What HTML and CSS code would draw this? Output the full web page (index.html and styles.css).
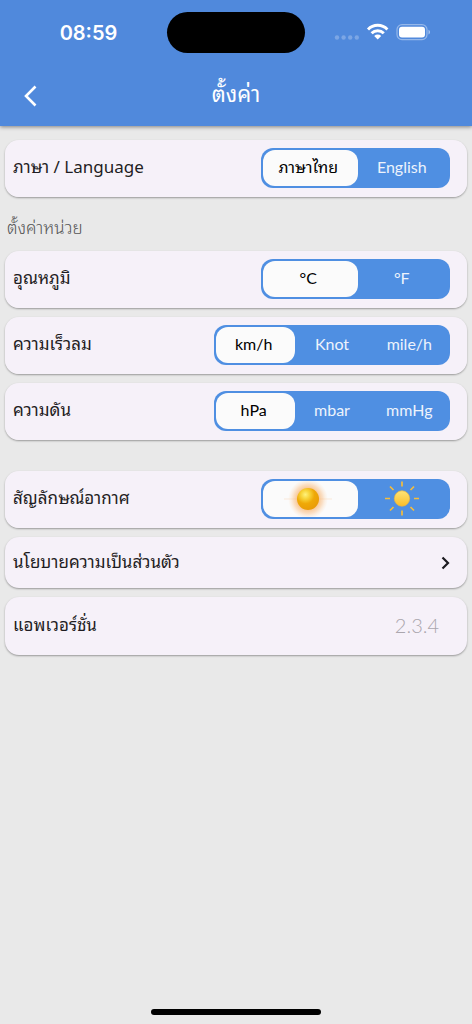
FILE: index.html
```html
<!DOCTYPE html>
<html lang="th">
<head>
<meta charset="utf-8">
<meta name="viewport" content="width=device-width, initial-scale=1">
<title>ตั้งค่า</title>
<link rel="stylesheet" href="styles.css">
</head>
<body>
<div class="screen">
  <header class="header">
    <div class="status">
      <time class="clock">08:59</time>
      <div class="island"></div>
      <div class="indicators">
        <svg width="96" height="20" viewBox="0 0 96 20" aria-hidden="true">
          <g fill="#fff" fill-opacity=".25"><circle cx="3" cy="14.500" r="2.200"/><circle cx="9.600" cy="14.500" r="2.200"/><circle cx="16.200" cy="14.500" r="2.200"/><circle cx="22.800" cy="14.500" r="2.200"/></g>
          <g fill="none" stroke="#fff" stroke-width="2.900"><path d="M34 6.400a13.500 13.500 0 0 1 19.400 0"/><path d="M37.600 10.300a8.600 8.600 0 0 1 12.200 0"/></g>
          <path d="M40.200 13a5 5 0 0 1 7 0L43.700 16.600z" fill="#fff"/>
          <rect x="63" y="1.600" width="30" height="15" rx="5" fill="none" stroke="#fff" stroke-opacity=".4" stroke-width="1.200"/>
          <rect x="65" y="3.800" width="26" height="10.600" rx="3" fill="#fff"/>
          <path d="M94.500 6.700c2 .8 2 4 0 4.800z" fill="#fff" fill-opacity=".5"/>
        </svg>
      </div>
    </div>
    <div class="bar">
      <button class="back" type="button" aria-label="กลับ">
        <svg width="14" height="22" viewBox="0 0 14 22" aria-hidden="true"><path d="M11.500 1.500 2 11l9.500 9.500" fill="none" stroke="#fff" stroke-width="2.600"/></svg>
      </button>
      <h1 class="title">ตั้งค่า</h1>
    </div>
  </header>
  <main class="settings">
    <fieldset class="card" aria-labelledby="language">
      <span class="name" id="language">ภาษา / Language</span>
      <div class="segments two">
        <label class="segment"><input type="radio" name="language" checked><span>ภาษาไทย</span></label>
        <label class="segment"><input type="radio" name="language"><span>English</span></label>
      </div>
    </fieldset>
    <h2 class="section">ตั้งค่าหน่วย</h2>
    <fieldset class="card" aria-labelledby="temperature">
      <span class="name" id="temperature">อุณหภูมิ</span>
      <div class="segments two">
        <label class="segment"><input type="radio" name="temperature" checked><span>°C</span></label>
        <label class="segment"><input type="radio" name="temperature"><span>°F</span></label>
      </div>
    </fieldset>
    <fieldset class="card" aria-labelledby="wind">
      <span class="name" id="wind">ความเร็วลม</span>
      <div class="segments three">
        <label class="segment"><input type="radio" name="wind" checked><span>km/h</span></label>
        <label class="segment"><input type="radio" name="wind"><span>Knot</span></label>
        <label class="segment"><input type="radio" name="wind"><span>mile/h</span></label>
      </div>
    </fieldset>
    <fieldset class="card group-end" aria-labelledby="pressure">
      <span class="name" id="pressure">ความดัน</span>
      <div class="segments three">
        <label class="segment"><input type="radio" name="pressure" checked><span>hPa</span></label>
        <label class="segment"><input type="radio" name="pressure"><span>mbar</span></label>
        <label class="segment"><input type="radio" name="pressure"><span>mmHg</span></label>
      </div>
    </fieldset>
    <fieldset class="card" aria-labelledby="symbols">
      <span class="name" id="symbols">สัญลักษณ์อากาศ</span>
      <div class="segments two">
        <label class="segment picture"><input type="radio" name="symbols" aria-label="สมจริง" checked>
          <svg width="48" height="36" viewBox="0 0 48 36" aria-hidden="true">
            <defs>
              <radialGradient id="halo"><stop offset=".45" stop-color="#f6a34d" stop-opacity=".75"/><stop offset=".75" stop-color="#f9bd82" stop-opacity=".45"/><stop offset="1" stop-color="#fde3c8" stop-opacity=".1"/></radialGradient>
              <radialGradient id="ball" cx=".38" cy=".3" r=".75"><stop offset="0" stop-color="#fff27d"/><stop offset=".25" stop-color="#f8d63c"/><stop offset=".55" stop-color="#efa908"/><stop offset="1" stop-color="#e89a08"/></radialGradient>
            </defs>
            <path d="M0 18h48" stroke="#fbe3cd" stroke-width=".7"/>
            <circle cx="24" cy="18" r="19.500" fill="url(#halo)"/>
            <circle cx="24" cy="18" r="11" fill="url(#ball)"/>
          </svg>
        </label>
        <label class="segment picture"><input type="radio" name="symbols" aria-label="เรียบง่าย">
          <svg width="36" height="36" viewBox="0 0 36 36" aria-hidden="true">
            <defs><linearGradient id="sun" x2="0" y2="1"><stop stop-color="#fee477"/><stop offset="1" stop-color="#fbbd27"/></linearGradient></defs>
            <path d="M18 .5v5M18 29.500v5M1 17.500h5M30 17.500h5M6 5.500l3.500 3.500M26.500 26 30 29.500M6 29.500l3.500-3.500M26.500 9 30 5.500" stroke="#f5bd3b" stroke-width="1.700"/>
            <circle cx="18" cy="17.500" r="7.700" fill="url(#sun)" stroke="#e9b441" stroke-width=".7"/>
          </svg>
        </label>
      </div>
    </fieldset>
    <a class="card link" href="#privacy">
      <span class="name">นโยบายความเป็นส่วนตัว</span>
      <svg width="9" height="14" viewBox="0 0 9 14" aria-hidden="true"><path d="m1.500 1.500 5.500 5.500-5.500 5.500" fill="none" stroke="#1c1b20" stroke-width="2.200"/></svg>
    </a>
    <div class="card version">
      <span class="name">แอพเวอร์ชั่น</span>
      <span class="number">2.3.4</span>
    </div>
  </main>
  <div class="home"></div>
</div>
</body>
</html>
```
FILE: styles.css
```css
* {
  box-sizing: border-box;
}

body {
  margin: 0;
  background: #e9e9e9;
  color: #1f1d23;
  font-family: Lato, "Noto Sans Thai Looped", "Noto Sans Thai", "Noto Sans", sans-serif;
}

.screen {
  min-height: 100vh;
  display: flex;
  flex-direction: column;
}

.header {
  background: #5089dc;
  color: #fff;
  box-shadow: 0 1px 4px rgba(0, 0, 0, 0.45);
}

.status {
  display: grid;
  grid-template-columns: 1fr 138px 1fr;
  align-items: center;
  padding-top: 12px;
}

.clock {
  padding-left: 10px;
  text-align: center;
  font: 600 20px/24px Inter, sans-serif;
}

.island {
  height: 41px;
  border-radius: 21px;
  background: #000;
}

.indicators {
  display: flex;
  justify-content: flex-end;
  padding-right: 42px;
}

.bar {
  display: grid;
  grid-template-columns: 62px 1fr 62px;
  align-items: center;
  height: 73px;
  padding-top: 12px;
}

.back {
  display: flex;
  justify-content: center;
  padding: 8px;
  border: 0;
  background: none;
}

.title {
  margin: 0;
  padding-bottom: 4px;
  text-align: center;
  font-size: 22px;
  font-weight: 400;
  line-height: 32px;
}

.settings {
  flex: 1;
  display: flex;
  flex-direction: column;
  gap: 9px;
  padding: 14px 5px;
}

.card {
  display: flex;
  align-items: center;
  justify-content: space-between;
  min-width: 0;
  min-height: 57px;
  margin: 0;
  padding: 8px 17px 8px 8px;
  border: 0;
  border-radius: 14px;
  background: #f6f1f9;
  box-shadow: 0 1px 2px rgba(0, 0, 0, 0.35);
}

.name {
  padding-bottom: 2px;
  font-family: "Noto Sans", "Noto Sans Thai Looped", "Noto Sans Thai", sans-serif;
  font-size: 17px;
  line-height: 24px;
}

.section {
  margin: 0;
  padding: 8px 2px 0;
  color: #555;
  font-size: 17px;
  font-weight: 300;
  line-height: 28px;
}

.segments {
  display: grid;
  grid-auto-flow: column;
  grid-auto-columns: 1fr;
  height: 40px;
  padding: 2px;
  border-radius: 12px;
  background: #4f8fe2;
}

.two {
  width: 189px;
}

.three {
  width: 236px;
}

.segment {
  position: relative;
  display: flex;
  align-items: center;
  justify-content: center;
  padding-bottom: 2px;
  border-radius: 12px;
  color: #edf3fc;
  font-size: 16px;
  line-height: 24px;
}

.segment:has(input:checked) {
  margin-right: -2px;
  padding-right: 4px;
  background: #fbfbfb;
  color: #000;
}

.picture {
  padding-bottom: 0;
}

.segment input {
  position: absolute;
  inset: 0;
  width: 100%;
  height: 100%;
  margin: 0;
  opacity: 0;
}

.group-end {
  margin-bottom: 22px;
}

.link {
  min-height: 51px;
  color: inherit;
  text-decoration: none;
}

.version {
  min-height: 58px;
  padding-right: 28px;
}

.number {
  padding-bottom: 2px;
  color: #aaa6ad;
  font-size: 20px;
  font-weight: 300;
  line-height: 24px;
}

.home {
  align-self: center;
  width: 36%;
  height: 6px;
  margin-bottom: 9px;
  border-radius: 3px;
  background: #000;
}
```
